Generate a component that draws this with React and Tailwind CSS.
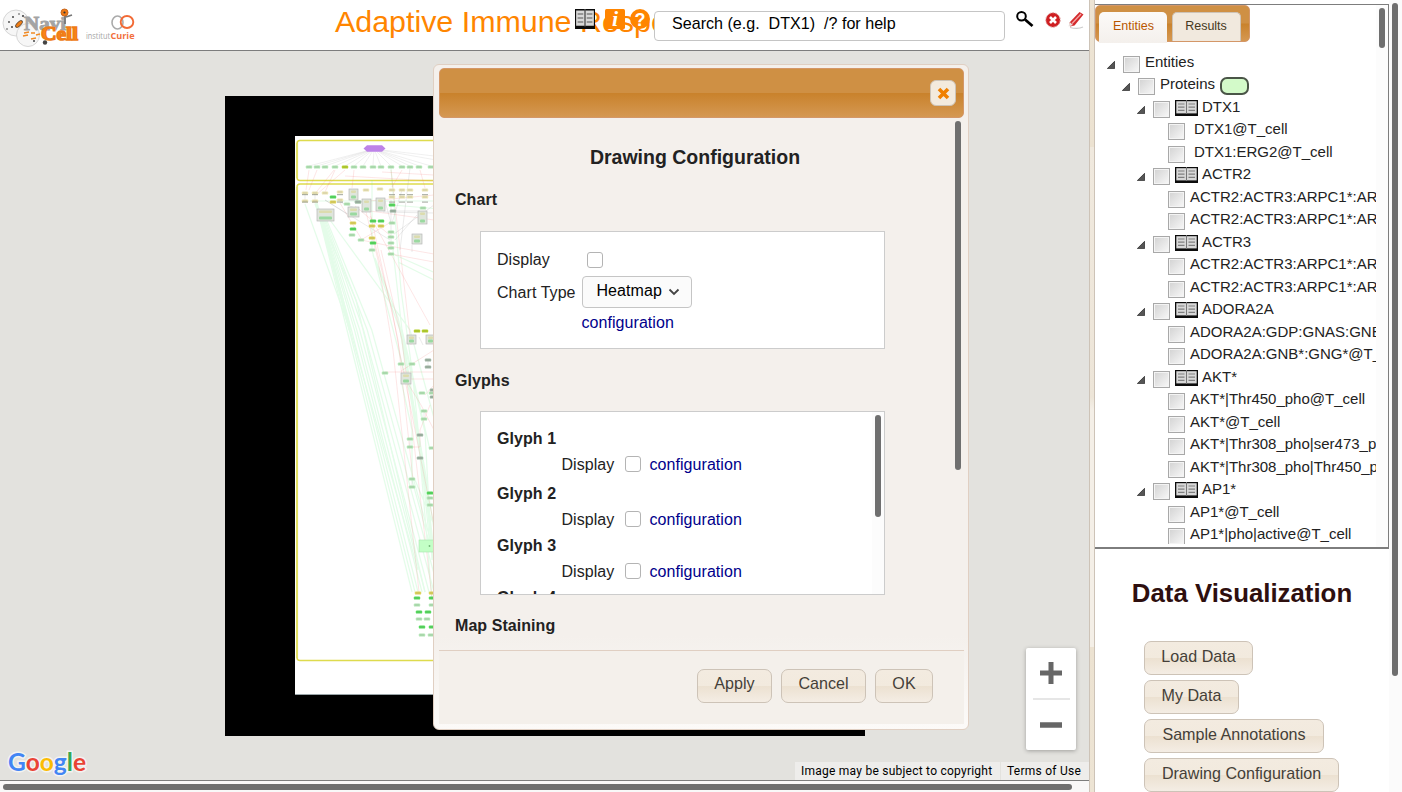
import React from "react";

const TREE = [
  [0, "Entities"],
  [1, "Proteins"],
  [2, "DTX1"],
  [3, "DTX1@T_cell", true],
  [3, "DTX1:ERG2@T_cell", true],
  [2, "ACTR2"],
  [3, "ACTR2:ACTR3:ARPC1*:ARPC2:ARPC3"],
  [3, "ACTR2:ACTR3:ARPC1*:ARPC2:ARPC3"],
  [2, "ACTR3"],
  [3, "ACTR2:ACTR3:ARPC1*:ARPC2:ARPC3"],
  [3, "ACTR2:ACTR3:ARPC1*:ARPC2:ARPC3"],
  [2, "ADORA2A"],
  [3, "ADORA2A:GDP:GNAS:GNB*:GNG*"],
  [3, "ADORA2A:GNB*:GNG*@T_cell"],
  [2, "AKT*"],
  [3, "AKT*|Thr450_pho@T_cell"],
  [3, "AKT*@T_cell"],
  [3, "AKT*|Thr308_pho|ser473_pho"],
  [3, "AKT*|Thr308_pho|Thr450_pho"],
  [2, "AP1*"],
  [3, "AP1*@T_cell"],
  [3, "AP1*|pho|active@T_cell"],
];

const INDENT = ["pl-[11px]", "pl-[26px]", "pl-[41px]", "pl-[56px]"];

const BTN =
  "rounded-[7px] border border-[#cdc3b7] bg-[linear-gradient(#f3ebe0_0%,#f2eade_49%,#ece1d1_51%,#f4ede4_100%)] text-[16.100px] text-[#453f38] h-[34px] leading-none whitespace-nowrap";

function Book({ className }) {
  return (
    <svg className={className} viewBox="0 0 23 16" preserveAspectRatio="none">
      <rect width="23" height="16" fill="#0c0c0c" />
      <rect x="1.3" y="1.2" width="9.7" height="12.2" fill="#d8d8d8" />
      <rect x="12" y="1.2" width="9.7" height="12.2" fill="#d8d8d8" />
      <path d="M11.5 0v14" stroke="#777" strokeWidth="1" />
      <path d="M3 4h6.5M3 7.2h6.5M3 10.4h6.5M13.5 4H20M13.5 7.2H20M13.5 10.4H20" stroke="#808080" strokeWidth="1.2" />
    </svg>
  );
}

function TreeRow({ level, label, wide }) {
  return (
    <div className={`flex h-[22.5px] shrink-0 items-start ${INDENT[level]}`}>
      <div className="h-full w-[17px] shrink-0">
        {level < 3 && (
          <svg className="mt-[10px] ml-[1px] h-[8px] w-[8px]" viewBox="0 0 8 8">
            <path d="M7.6 0.3V7.6H0.3Z" fill="#555" stroke="#222" strokeWidth="0.7" />
          </svg>
        )}
      </div>
      <div className="mt-[5px] h-[17px] w-[17px] shrink-0 border-[1.5px] border-[#a8a8a8] bg-[linear-gradient(135deg,#d2d2d2,#f8f8f8)] shadow-[inset_0_0_0_1px_#f4f4f4]" />
      {level === 2 && <Book className="mt-[4px] mr-[-1px] ml-[5px] h-[16px] w-[23px] shrink-0" />}
      <span className={`text-[15px] leading-[22px] whitespace-nowrap text-[#222] ${wide ? "ml-[9px]" : "ml-[5px]"}`}>{label}</span>
      {level === 1 && <div className="mt-[4px] ml-[5px] h-[18px] w-[29px] shrink-0 rounded-[7px] border-2 border-[#4a5547] bg-[#d3fac9]" />}
    </div>
  );
}

const NODES = {
  "#b2e4b4": [
    [309, 167], [317, 167], [325, 167], [335, 167], [354, 167], [363, 167], [373, 167], [381, 167], [391, 167], [402, 167], [410, 167], [419, 167], [431, 167],
    [347, 204], [358, 202], [392, 223], [352, 235], [361, 240], [372, 250], [391, 232], [391, 237], [391, 243], [391, 248], [391, 254], [423, 208],
    [401, 364], [412, 364], [385, 373], [422, 393], [424, 411], [424, 419], [410, 439], [410, 447], [412, 479], [412, 487], [430, 498], [430, 505], [417, 605], [432, 605], [419, 619], [427, 619], [422, 635], [431, 635], [432, 393], [432, 448],
  ],
  "#55d95c": [
    [333, 197], [353, 229], [373, 221], [381, 221], [373, 243], [392, 205], [430, 493], [417, 598], [432, 598], [419, 612], [428, 612], [422, 627], [432, 627],
  ],
  "#ddd25a": [[333, 202], [353, 223], [372, 226], [381, 226], [372, 238], [418, 593], [432, 593]],
  "#b4cf2c": [[345, 167], [417, 331], [425, 331]],
  "#ebe4b4": [
    [305, 193], [315, 193], [325, 193], [340, 192], [305, 201], [315, 201], [340, 200], [366, 190], [380, 189], [392, 190], [402, 190], [410, 190], [425, 190], [392, 197], [402, 197], [410, 197], [425, 197],
  ],
  "#9fb5a4": [[358, 202], [428, 360], [428, 367], [420, 435], [420, 458], [393, 211], [433, 390], [433, 397]],
};

const COMPLEXES = [
  [317, 209, 17, 12], [349, 189, 9, 11], [348, 207, 11, 10], [362, 199, 9, 13], [376, 198, 9, 13],
  [418, 211, 9, 13], [412, 234, 10, 10], [407, 335, 9, 9], [426, 335, 9, 9], [401, 373, 10, 11],
];

function MapDrawing() {
  return (
    <svg className="block h-[640px] w-[640px]" viewBox="225 96 640 640">
      <rect x="225" y="96" width="640" height="640" fill="#000" />
      <rect x="295" y="136" width="500" height="559" fill="#fff" />
      <path d="M295 694.5H795" stroke="#9aa5a8" />
      <g fill="none" stroke="#dedb4e">
        <rect x="297" y="140.5" width="480" height="40" rx="3" strokeWidth="1.5" />
        <rect x="297" y="184" width="480" height="476.500" rx="3" strokeWidth="1.5" />
        <path d="M297 143V178M297 187V658" strokeWidth="2.2" strokeOpacity="0.5" />
      </g>
      <g stroke="#d8d8d8" strokeWidth="0.4">
        {[309, 317, 325, 335, 345, 354, 363, 373, 381, 391, 402, 410, 419, 431, 470, 520].map((x) => (
          <path key={x} d={`M374 149L${x} 166`} />
        ))}
      </g>
      <g stroke="#5cf07a" strokeWidth="1.2" fill="none" opacity="0.16">
        {[0, 3, 6, 10, 13, 17, 22, 27, 33].map((d) => (
          <path key={d} d={`M${320 + d * 0.2} 220L${347 + d * 0.75} 330L${412 + d} 592`} />
        ))}
        <path d="M305 204L350 330L418 570M315 204L356 300L425 592M330 220L410 330L440 440M391 168L401 290L412 370L430 545M373 255L400 330L425 470L434 530M393 250L402 330L430 450M398 262L440 283M395 255L440 275M375 258L398 318L425 432L432 560M372 180L372 250L417 420L432 600M310 201H440M392 205L440 209M401 380L412 430L412 480L434 560M415 480L434 525" />
        <path strokeWidth="3" d="M316 203L322 222L350 330M401 330L412 400L425 480L434 560" />
      </g>
      <g stroke="#f47070" strokeWidth="0.8" fill="none" opacity="0.22">
        <path d="M366 212L378 260L393 350L419 592M370 212L398 340L413 480M374 240L392 310L403 370L434 525M381 250L402 340L432 598M309 170L306 190M317 170L309 190M334 170L314 195M345 170L316 195M354 170L352 188M335 170L325 192M345 176L434 181M358 202L434 195M363 210L434 220M361 240L391 222M361 240L400 248L434 254M391 254L434 262M340 203L362 240M385 372H434M401 379H434M407 382L421 405L434 430M425 395L434 385M410 447H420V430L430 405M391 170L411 345M370 216L430 325M402 170L392 187M420 170L425 188M401 371L434 350M355 206L392 237M382 172L434 175" />
      </g>
      <g stroke="#9a9a9a" strokeWidth="0.5" fill="none" opacity="0.4">
        <path d="M325 200L347 214M325 200L390 240M340 202L360 210M383 212L434 213M391 200V250M395 240L417 215M394 234L434 205M412 245V252M305 193V201M315 193V201M428 360V367M424 411V419M410 439V447M412 479V487M385 201L391 223M419 337L423 345M402 190L392 223M393 211H420M410 168L400 250" />
      </g>
      <path d="M363.500 148.500L367 145.300H382L385.500 148.500L382 151.700H367Z" fill="#bd83e8" />
      {COMPLEXES.map(([x, y, w, h]) => (
        <g key={`${x}-${y}`}>
          <rect x={x} y={y} width={w} height={h} fill="#dfe5dc" stroke="#b8b8b8" strokeWidth="0.7" />
          <rect x={x + 2} y={y + 1.5} width={w - 4} height="2.4" rx="1" fill="#dcdcae" />
          <rect x={x + 2} y={y + h - 4.5} width={w - 4} height="3" rx="1" fill="#9ad9a0" />
        </g>
      ))}
      {Object.entries(NODES).map(([fill, points]) =>
        points.map(([x, y]) => (
          <g key={`${fill}-${x}-${y}`}>
            <rect x={x - 3.2} y={y - 1.6} width="6.4" height="3.2" rx="1.2" fill={fill} />
            <rect x={x - 2} y={y - 0.4} width="4" height="0.8" fill="#555" opacity="0.22" />
          </g>
        ))
      )}
      <g fill="#7e8578" opacity="0.6">
        {[305, 315, 340, 392, 402, 410, 425].map((x) => (
          <React.Fragment key={x}>
            <rect x={x - 3} y="194" width="6" height="1.2" />
            <rect x={x - 3} y="201.500" width="6" height="1.2" />
          </React.Fragment>
        ))}
      </g>
      <rect x="419" y="540" width="18" height="12" fill="#c3ffc6" stroke="#a9e5ad" strokeWidth="0.6" />
      <circle cx="429.500" cy="546" r="0.9" fill="#73b878" />
    </svg>
  );
}

function Logos() {
  return (
    <svg className="h-[50px] w-[140px] shrink-0" viewBox="0 0 140 50">
      <g fill="#f6f6f6" stroke="#cdcdcd" strokeWidth="0.8">
        <circle cx="16" cy="23" r="13" />
        <circle cx="28" cy="35" r="11.500" />
      </g>
      <g fill="#444">
        <circle cx="13" cy="17" r="1" /><circle cx="19" cy="14" r="0.8" /><circle cx="9" cy="22" r="0.9" /><circle cx="23" cy="16" r="1.1" />
        <circle cx="12" cy="27" r="1" /><circle cx="34" cy="41" r="1" /><circle cx="45" cy="42.500" r="2.200" /><circle cx="7" cy="29" r="0.8" />
      </g>
      <ellipse cx="19" cy="24" rx="4.500" ry="2" fill="#ef7d15" stroke="#333" strokeWidth="0.7" transform="rotate(-45 19 24)" />
      <path d="M24 33l5-1M31 33h4M23 36l5-1M31 39l5-1M36 35l4-1" stroke="#f08a24" strokeWidth="1.500" />
      <text x="24" y="30" fontFamily="Liberation Serif, serif" fontWeight="700" fontSize="18" textLength="42" lengthAdjust="spacingAndGlyphs" fill="#a4a4a4" stroke="#a4a4a4" strokeWidth="0.900">Navi</text>
      <text x="41" y="40" fontFamily="Liberation Serif, serif" fontWeight="700" fontSize="19" textLength="37" lengthAdjust="spacingAndGlyphs" fill="#ff8418" stroke="#ee7c16" strokeWidth="1.500">Cell</text>
      <path d="M65 24V14M66 17l6-2" stroke="#777" strokeWidth="1.800" />
      <circle cx="64.500" cy="12.500" r="3.500" fill="#f07a15" stroke="#c8651a" />
      <circle cx="64.500" cy="12.500" r="1.100" fill="#333" />
      <g fill="none" strokeWidth="1.600">
        <ellipse cx="117.500" cy="22.500" rx="5.500" ry="6.500" stroke="#aaa" />
        <ellipse cx="127" cy="22" rx="6.300" ry="6" stroke="#f26a35" strokeWidth="1.900" />
      </g>
      <text x="86" y="38.500" fontFamily="Open Sans, sans-serif" fontSize="9" textLength="24" lengthAdjust="spacingAndGlyphs" fill="#a5a5a5">institut</text>
      <text x="110.500" y="38.500" fontFamily="Open Sans, sans-serif" fontWeight="700" fontSize="9.500" textLength="24" lengthAdjust="spacingAndGlyphs" fill="#f2703d">Curie</text>
    </svg>
  );
}

function Header() {
  return (
    <header className="relative flex h-[51px] shrink-0 border-b border-[#7d7d7d] bg-white">
      <Logos />
      <h1 className="ml-[195px] w-[319px] shrink-0 pt-[3px] text-[30.400px] leading-[36px] whitespace-nowrap text-[#ff8500]">Adaptive Immune Response</h1>
      <div className="absolute top-[9px] left-[575px] flex">
        <Book className="h-[20px] w-[20px]" />
        <svg className="ml-[10px] h-[20px] w-[20px]" viewBox="0 0 20 20">
          <rect width="20" height="20" rx="1.500" fill="#ff8500" />
          <text x="10" y="17" textAnchor="middle" fontFamily="Liberation Serif, serif" fontStyle="italic" fontWeight="700" fontSize="22" fill="#fff">i</text>
        </svg>
        <svg className="ml-[5px] h-[20px] w-[20px]" viewBox="0 0 20 20">
          <circle cx="10" cy="10" r="10" fill="#ff8500" />
          <text x="10" y="16.500" textAnchor="middle" fontFamily="Liberation Sans, sans-serif" fontWeight="700" fontSize="18" fill="#fff">?</text>
        </svg>
      </div>
      <div className="z-10 mt-[11px] flex h-[30px] w-[351px] shrink-0 items-center rounded-[4px] border border-[#c5c5c5] bg-white pb-[5px] pl-[17px] text-[16.100px] whitespace-pre text-black">Search (e.g.  DTX1)  /? for help</div>
      <svg className="mt-[10px] ml-[10px] h-[18px] w-[20px] shrink-0" viewBox="0 0 20 18">
        <circle cx="6.500" cy="6.200" r="4.300" fill="none" stroke="#000" strokeWidth="2" />
        <path d="M10 9.500l7.500 6.500" stroke="#000" strokeWidth="2.800" />
      </svg>
      <svg className="mt-[12px] ml-[10px] h-[16px] w-[16px] shrink-0" viewBox="0 0 16 16">
        <circle cx="8" cy="8" r="7.200" fill="#cf1f22" stroke="#d99" strokeWidth="1" strokeDasharray="2 1" />
        <path d="M5 5l6 6M11 5l-6 6" stroke="#fff" strokeWidth="2.600" />
      </svg>
      <svg className="mt-[10px] ml-[6px] h-[19px] w-[18px] shrink-0" viewBox="0 0 18 19">
        <path d="M3 17.500q8 2 13-0.500" stroke="#ccc" fill="none" strokeWidth="1.200" />
        <path d="M2.500 12.500L12.500 2l4 2.500L7.500 15.500l-4.500 1z" fill="#d42a2c" />
        <path d="M5 13.500L14 4" stroke="#f3a5a5" strokeWidth="1.300" />
        <path d="M1.500 16.500l1.200-4.500 3.300 3z" fill="#e8e0dc" />
      </svg>
    </header>
  );
}

function CheckBox({ className }) {
  return <div className={`h-[16px] w-[16px] shrink-0 rounded-[3px] border border-[#b4b4b4] bg-white ${className}`} />;
}

function GlyphRow({ n, className }) {
  return (
    <div className={`shrink-0 ${className}`}>
      <div className="h-[20px] pl-[16px] text-[16px] leading-[20px] font-bold tracking-[0.06px]">Glyph {n}</div>
      <div className="mt-[6px] flex h-[20px] items-center pl-[80.500px] text-[16px] leading-[20px] tracking-[0.06px]">
        <span className="w-[63.500px]">Display</span>
        <CheckBox className="-mt-[2px]" />
        <a className="ml-[8.500px] text-[#00008b]">configuration</a>
      </div>
    </div>
  );
}

function Dialog() {
  return (
    <section className="absolute top-[64px] left-[433px] z-20 flex h-[666px] w-[536px] flex-col rounded-[6px] border border-[#e0cfc2] bg-[linear-gradient(#f4f0ec_0%,#f4f0ec_86%,#fcfaf8_100%)] px-[5px] pt-[3px] text-[#222]">
      <div className="flex h-[50px] w-[525px] shrink-0 items-center justify-end rounded-[5px] border border-[#d49768] bg-[linear-gradient(#cf9044_0%,#cf9044_49%,#c9822c_51%,#d59852_100%)] pr-[7px]">
        <button className="mb-px flex h-[26px] w-[26px] items-center justify-center rounded-[6px] border border-[#cdc3b7] bg-[#f3eadd]">
          <svg className="mt-[2px] ml-px h-[13px] w-[13px]" viewBox="0 0 13 13">
            <path d="M2 2l9 9M11 2l-9 9" stroke="#f08000" strokeWidth="3.600" />
          </svg>
        </button>
      </div>
      <div className="flex h-[532px] shrink-0 overflow-hidden">
        <div className="flex w-[516px] shrink-0 flex-col pl-[16px]">
          <h2 className="mt-[27px] -ml-[20px] h-[24px] text-center text-[19.500px] leading-[24px] font-bold">Drawing Configuration</h2>
          <h3 className="mt-[21px] h-[20px] text-[16px] leading-[20px] font-bold tracking-[0.06px]">Chart</h3>
          <div className="mt-[21px] ml-[25px] h-[118px] w-[405px] shrink-0 border border-[#ccc] bg-white pt-[18px] pl-[16px] text-[16px] leading-[20px] tracking-[0.06px]">
            <div className="flex h-[20px] items-center">
              <span className="w-[90px]">Display</span>
              <CheckBox />
            </div>
            <div className="mt-[6px] flex h-[32px] items-center">
              <span className="w-[85px] pt-[2px] whitespace-nowrap">Chart Type</span>
              <div className="flex h-[32px] w-[110px] items-center rounded-[4px] border border-[#c5c5c5] bg-[#fbfbfb] pb-[3px] pl-[13.500px] text-black">
                Heatmap
                <svg className="mt-[3px] ml-[6px] h-[8px] w-[12px]" viewBox="0 0 12 8">
                  <path d="M1.500 1.500L6 6l4.500-4.500" fill="none" stroke="#444" strokeWidth="1.800" />
                </svg>
              </div>
            </div>
            <a className="mt-[5px] ml-[84.500px] block text-[#00008b]">configuration</a>
          </div>
          <h3 className="mt-[22px] h-[20px] shrink-0 text-[16px] leading-[20px] font-bold tracking-[0.06px]">Glyphs</h3>
          <div className="mt-[20px] ml-[25px] flex h-[184px] w-[405px] shrink-0 overflow-hidden border border-[#ccc] bg-white">
            <div className="flex w-[391px] flex-col">
              <GlyphRow n={1} className="mt-[17px]" />
              <GlyphRow n={2} className="mt-[9px]" />
              <GlyphRow n={3} className="mt-[6px]" />
              <GlyphRow n={4} className="mt-[6px]" />
            </div>
            <div className="w-[12px] bg-[#fcfcfc] pt-[3px] pl-[3px]">
              <div className="h-[102px] w-[6px] rounded-full bg-[#6f6f6f]" />
            </div>
          </div>
          <h3 className="mt-[21px] shrink-0 text-[16px] leading-[20px] font-bold tracking-[0.06px]">Map Staining</h3>
        </div>
        <div className="mt-[3px] h-[349px] w-[6px] rounded-full bg-[#6f6f6f]" />
      </div>
      <div className="flex h-[74px] w-[525px] shrink-0 justify-end gap-[9px] border-t border-[#e0cfc2] bg-[#f4f0eb] pt-[18px] pr-[31px]">
        <button className={`w-[75px] pb-[5px] ${BTN}`}>Apply</button>
        <button className={`w-[85px] pb-[5px] ${BTN}`}>Cancel</button>
        <button className={`w-[58px] pb-[5px] ${BTN}`}>OK</button>
      </div>
    </section>
  );
}

function MapPane() {
  return (
    <main className="relative h-[729px] shrink-0 overflow-hidden bg-[#e3e2de]">
      <div className="absolute top-[45px] left-[225px]">
        <MapDrawing />
      </div>
      <svg className="absolute top-[694px] left-[4px] h-[34px] w-[90px]" viewBox="0 0 90 34">
        <text x="4" y="26" fontFamily="Lato, sans-serif" fontWeight="700" fontSize="25" textLength="78" lengthAdjust="spacingAndGlyphs" stroke="#fff" strokeOpacity="0.6" strokeWidth="3" paintOrder="stroke" fill="#4285f4">
          G<tspan fill="#ea4335">o</tspan><tspan fill="#fbbc04">o</tspan>g<tspan fill="#34a853">l</tspan><tspan fill="#ea4335">e</tspan>
        </text>
      </svg>
      <div className="absolute top-[597px] left-[1026px] flex h-[102px] w-[50px] flex-col items-center rounded-[2px] bg-white shadow-[0_1px_4px_rgba(0,0,0,0.3)]">
        <svg className="h-[50px] w-[50px]" viewBox="0 0 50 50">
          <path d="M14 25h22M25 14v22" stroke="#666" strokeWidth="5" />
        </svg>
        <div className="h-[2px] w-[37px] bg-[#e6e6e6]" />
        <svg className="h-[50px] w-[50px]" viewBox="0 0 50 50">
          <path d="M14 25h22" stroke="#666" strokeWidth="5.500" />
        </svg>
      </div>
      <div className="absolute right-0 bottom-0 flex h-[18px] gap-[1px] font-['Roboto'] text-[12px] leading-[18px] whitespace-nowrap text-black">
        <span className="w-[205px] bg-[#eeedeb] pl-[6px] tracking-[0.24px]">Image may be subject to copyright</span>
        <span className="w-[88px] bg-[#eeedeb] pl-[6px] tracking-[0.26px]">Terms of Use</span>
      </div>
    </main>
  );
}

function SidePanel() {
  return (
    <aside className="flex h-full w-[307px] shrink-0 overflow-hidden bg-white">
      <div className="w-[294px] shrink-0">
        <div className="mt-[4px] flex h-[545px] border-t border-r border-b-2 border-[#7d7d7d]">
          <div className="h-[539px] w-[281px] shrink-0 overflow-hidden">
            <div className="flex h-[37px] w-[155px] gap-[5px] rounded-[5px] border border-[#d49768] bg-[linear-gradient(#cf9044_0%,#cf9044_49%,#c9822c_51%,#d59852_100%)] pt-[6px] pl-[3px] text-[12.500px]">
              <div className="h-[31px] w-[68px] rounded-t-[5px] bg-[linear-gradient(#fcfaf8,#f4f0ec)] pt-[5px] pl-px text-center text-[#b85700]">Entities</div>
              <div className="h-[29px] w-[69px] rounded-t-[5px] border border-b-0 border-[#cdc3b7] bg-[#f1e9de] pt-[4px] pr-px text-center text-[#453821]">Results</div>
            </div>
            <div className="mt-[8.600px] flex flex-col">
              {TREE.map(([level, label, wide], i) => (
                <TreeRow key={i} level={level} label={label} wide={wide} />
              ))}
            </div>
          </div>
          <div className="h-full w-[12px] bg-[#fcfcfc] pt-[3px] pl-[3px]">
            <div className="h-[40px] w-[6px] rounded-full bg-[#6f6f6f]" />
          </div>
        </div>
        <h2 className="mt-[28px] h-[32px] text-center text-[25.800px] leading-[32px] font-bold text-[#2e0f0f]">Data Visualization</h2>
        <div className="mt-[32px] ml-[49px] flex flex-col items-start gap-[5px]">
          <button className={`w-[109px] pb-[3px] ${BTN}`}>Load Data</button>
          <button className={`w-[95px] pb-[3px] ${BTN}`}>My Data</button>
          <button className={`w-[180px] pb-[3px] ${BTN}`}>Sample Annotations</button>
          <button className={`w-[195px] pb-[3px] ${BTN}`}>Drawing Configuration</button>
        </div>
      </div>
      <div className="h-full w-[13px] bg-[#fbfbfb] pt-[3px] pl-[3px]">
        <div className="h-[673px] w-[6px] rounded-full bg-[#6f6f6f]" />
      </div>
    </aside>
  );
}

export default function App() {
  return (
    <div className="relative flex h-[792px] w-[1402px] overflow-hidden bg-white font-['Liberation_Sans',Arial,sans-serif]">
      <div className="flex w-[1089px] shrink-0 flex-col">
        <Header />
        <MapPane />
        <div className="h-[12px] border-t border-[#7d7d7d] bg-[#f9f8f8] pt-[3px] pl-[3px]">
          <div className="h-[6px] w-[1069px] rounded-full bg-[#6f6f6f]" />
        </div>
      </div>
      <div className="w-[6px] shrink-0 border-r border-l border-[#cdc3b7] bg-[linear-gradient(#ede4d4_0px,#ece2d1_147px,#f0e9de_147px,#ede5d8_397px,#f4efe7_410px,#f4efe7_647px,#ece2d1_647px,#ede4d4_792px)]" />
      <SidePanel />
      <Dialog />
    </div>
  );
}
